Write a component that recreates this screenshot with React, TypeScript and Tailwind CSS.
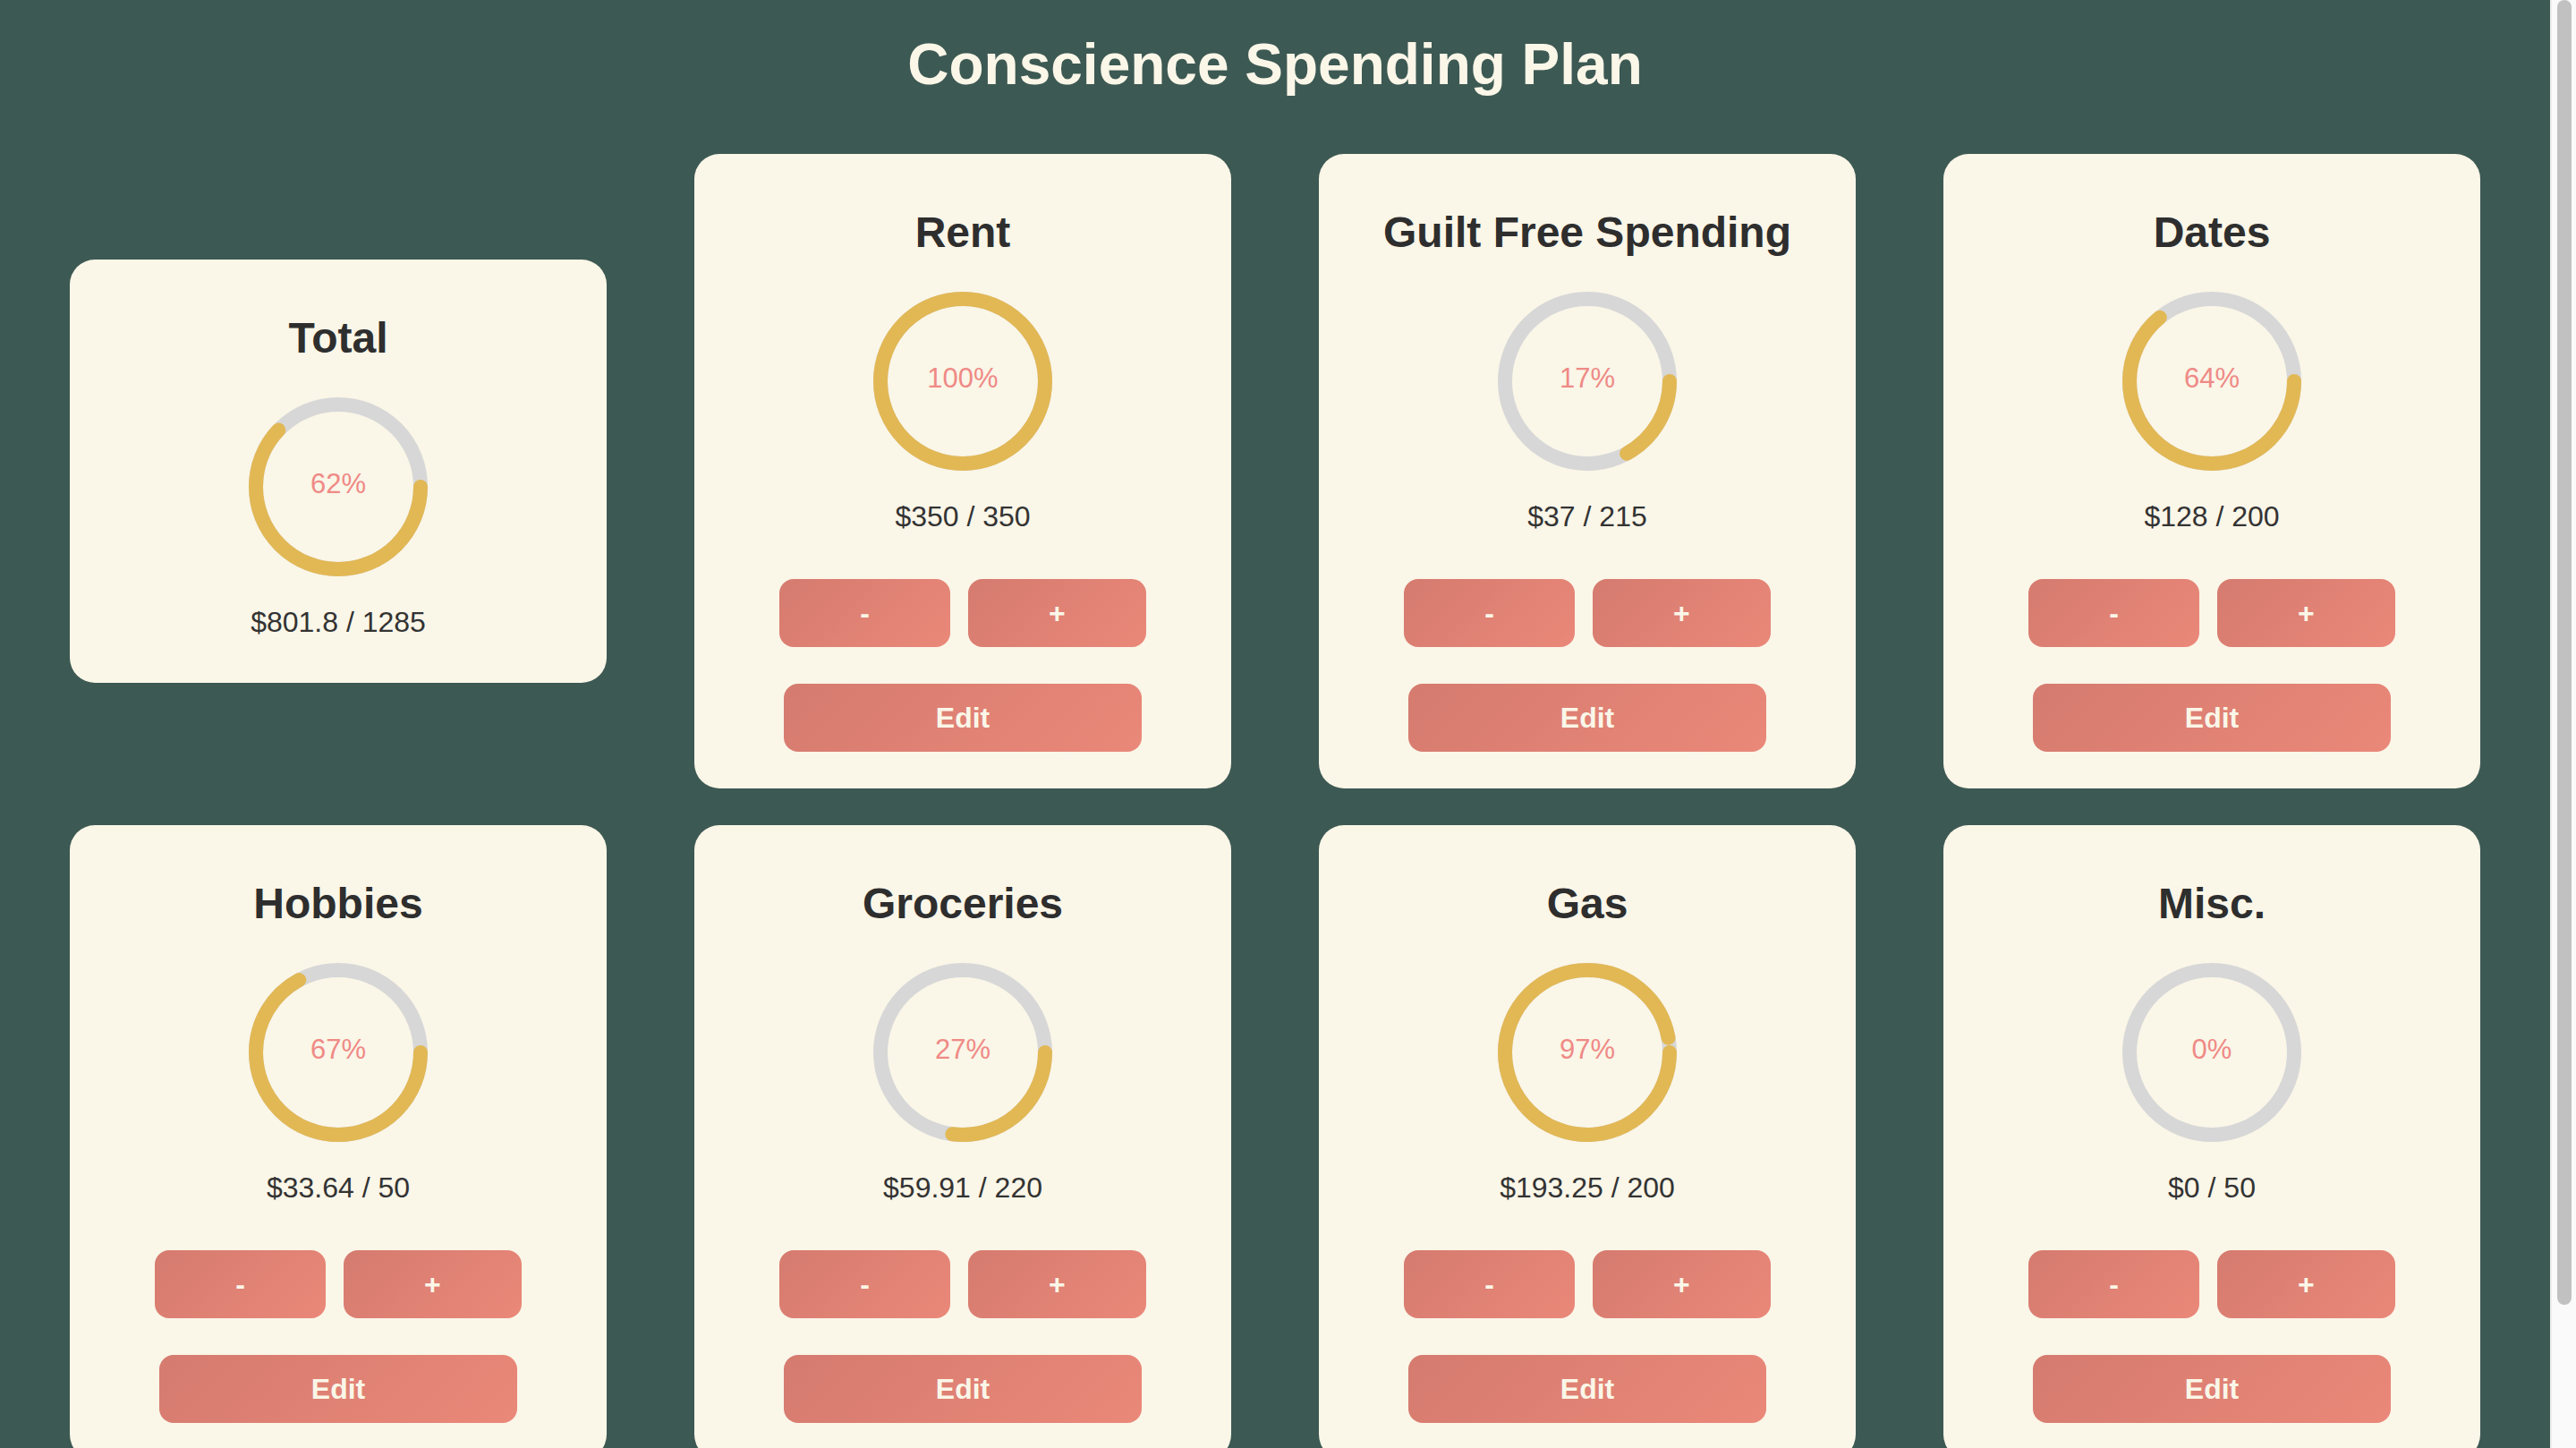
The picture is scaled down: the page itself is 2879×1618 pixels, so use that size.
import React from 'react';

type Category = {
  name: string;
  spent: number;
  budget: number;
  total?: boolean;
};

const categories: Category[] = [
  { name: 'Total', spent: 801.8, budget: 1285, total: true },
  { name: 'Rent', spent: 350, budget: 350 },
  { name: 'Guilt Free Spending', spent: 37, budget: 215 },
  { name: 'Dates', spent: 128, budget: 200 },
  { name: 'Hobbies', spent: 33.64, budget: 50 },
  { name: 'Groceries', spent: 59.91, budget: 220 },
  { name: 'Gas', spent: 193.25, budget: 200 },
  { name: 'Misc.', spent: 0, budget: 50 },
];

const btn =
  'rounded-[16px] bg-linear-135 from-[#d57b6f] to-[#ea8879] text-[32px] font-bold leading-none text-[#faf6e8]';

function Ring({ percent }: { percent: number }) {
  const r = 92;
  const c = 2 * Math.PI * r;
  const len = (Math.min(percent, 100) / 100) * c;

  return (
    <div className="relative h-[200px] w-[200px]">
      <svg width="200" height="200" viewBox="0 0 200 200">
        <circle cx="100" cy="100" r={r} fill="none" stroke="#d7d7d7" strokeWidth="16" />
        {percent > 0 && (
          <circle
            cx="100"
            cy="100"
            r={r}
            fill="none"
            stroke="#e2b855"
            strokeWidth="16"
            strokeLinecap={percent >= 100 ? 'butt' : 'round'}
            strokeDasharray={`${len} ${c}`}
          />
        )}
      </svg>
      <div className="absolute inset-0 flex items-center justify-center pb-[8px] text-[31px] leading-none text-[#ef8a86]">
        {percent}%
      </div>
    </div>
  );
}

function BudgetCard({ item }: { item: Category }) {
  const percent = Math.round((item.spent / item.budget) * 100);

  return (
    <div className="flex w-[600px] flex-col items-center rounded-[28px] bg-[#faf6e8] pt-[64px] pb-[41px]">
      <h2 className="text-[48px] font-bold leading-none text-[#2e2e2e]">{item.name}</h2>
      <div className="mt-[42px]">
        <Ring percent={percent} />
      </div>
      <p className="mt-[35px] pb-[11px] text-[32px] leading-none text-[#333333]">
        ${item.spent} / {item.budget}
      </p>
      {!item.total && (
        <>
          <div className="mt-[43px] flex gap-[20px]">
            <button className={`${btn} px-[90px] py-[22px]`}>-</button>
            <button className={`${btn} px-[90px] py-[22px]`}>+</button>
          </div>
          <button className={`${btn} mt-[41px] w-[400px] py-[22px]`}>Edit</button>
        </>
      )}
    </div>
  );
}

export default function App() {
  return (
    <div
      className="flex h-screen overflow-hidden bg-[#3d5953]"
      style={{ fontFamily: '"Liberation Sans", Arial, Helvetica, sans-serif' }}
    >
      <main className="min-w-0 flex-1 pt-[40px]">
        <h1 className="text-center text-[64px] font-bold leading-none text-[#faf6e8]">
          Conscience Spending Plan
        </h1>
        <div className="mt-[68px] flex flex-wrap items-center justify-center gap-x-[98px] gap-y-[41px]">
          {categories.map((c) => (
            <BudgetCard key={c.name} item={c} />
          ))}
        </div>
      </main>
      {/* scrollbar */}
      <div className="w-[29px] shrink-0 border-l-[2px] border-[#ededed] bg-[#fafafa] pl-[6px]">
        <div className="h-[1458px] w-[16px] rounded-full bg-[#c1c1c1]" />
      </div>
    </div>
  );
}
